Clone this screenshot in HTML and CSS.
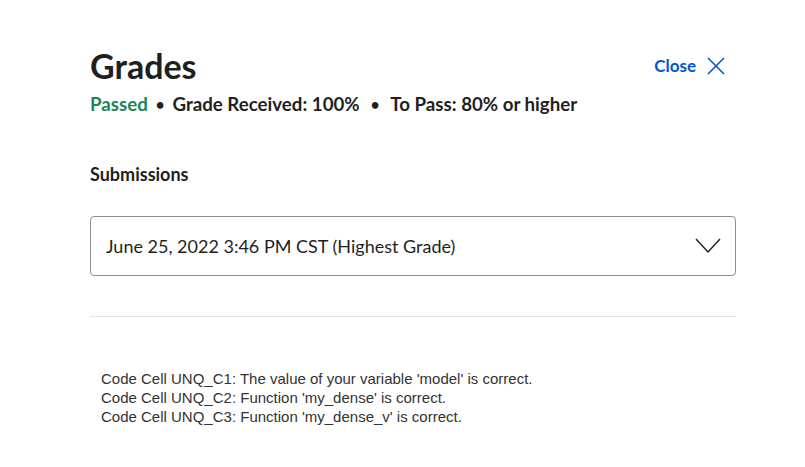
FILE: index.html
```html
<!DOCTYPE html>
<html>
<head>
<meta charset="utf-8">
<link rel="stylesheet" href="styles.css">
</head>
<body>
<div class="page">
  <div class="header">
    <h1 class="title">Grades</h1>
    <button class="close">Close
      <svg width="18" height="18" viewBox="0 0 18 18"><path d="M1 1L17 17M17 1L1 17" stroke="#0056d2" stroke-width="1.6" fill="none"/></svg>
    </button>
  </div>
  <div class="status">
    <span class="passed">Passed</span>
    <span class="dot">•</span>
    <span>Grade Received: 100%</span>
    <span class="dot wide">•</span>
    <span>To Pass: 80% or higher</span>
  </div>
  <div class="label">Submissions</div>
  <div class="select">
    <span>June 25, 2022 3:46 PM CST (Highest Grade)</span>
    <svg width="26" height="16" viewBox="0 0 26 16"><path d="M1 1L13 14L25 1" stroke="#1f1f1f" stroke-width="1.4" fill="none"/></svg>
  </div>
  <hr class="rule">
  <div class="feedback">
    <div>Code Cell UNQ_C1: The value of your variable 'model' is correct.</div>
    <div>Code Cell UNQ_C2: Function 'my_dense' is correct.</div>
    <div>Code Cell UNQ_C3: Function 'my_dense_v' is correct.</div>
  </div>
</div>
</body>
</html>
```
FILE: styles.css
```css
html, body { margin: 0; padding: 0; background: #fff; }
body { font-family: "Lato", "Open Sans", sans-serif; color: #1f1f1f; }
.page { width: 646px; padding: 44px 0 0 90px; }
.header { display: flex; justify-content: space-between; align-items: flex-start; }
.title { margin: 0; font-size: 34px; line-height: 44px; font-weight: 700; }
.close { display: flex; align-items: center; gap: 11px; background: none; border: 0; padding: 0 11px 0 0; margin-top: 11px; font-family: inherit; font-size: 17px; font-weight: 700; color: #0056d2; }
.status { margin-top: 4px; font-size: 18.7px; line-height: 24px; font-weight: 700; display: flex; gap: 8px; }
.passed { color: #1f8354; }
.dot { font-size: 15px; }
.dot.wide { margin: 0 3px; }
.label { margin-top: 46px; font-size: 18px; line-height: 24px; font-weight: 700; }
.select { margin-top: 30px; height: 58px; border: 1px solid #8f8f8f; border-radius: 4px; display: flex; align-items: center; justify-content: space-between; padding: 0 14px 0 15px; font-size: 18px; }
.rule { margin: 40px 0 0; border: 0; border-top: 1px solid #e5e5e5; }
.feedback { margin-top: 52px; padding-left: 11px; font-family: "Liberation Sans", Arial, sans-serif; font-size: 15px; line-height: 19px; color: #333; }
```
